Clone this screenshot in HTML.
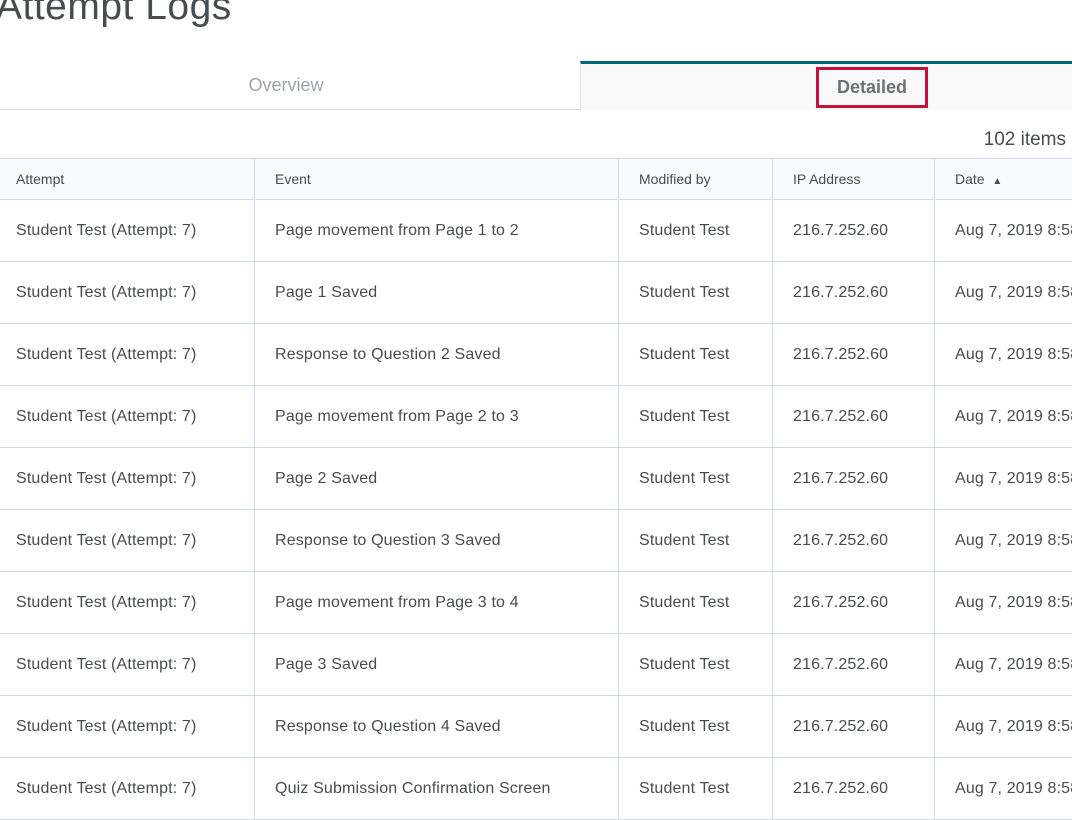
<!DOCTYPE html>
<html><head><style>
body{margin:0;width:1072px;height:811px;overflow:hidden;background:#fff;font-family:"Liberation Sans",sans-serif;color:#494c4e;position:relative}
h1{position:absolute;left:-4px;top:-15px;margin:0;font-weight:normal;font-size:39px;color:#494c4e;letter-spacing:0.5px}
.ov{position:absolute;left:0;top:62px;width:580px;height:47px;border-bottom:1px solid #dcdfe2;text-align:center;line-height:47px;font-size:18px;color:#a0a3a6}
.ov span{position:relative;left:-4px}
.dt{position:absolute;left:580px;top:61px;width:492px;height:49px;border-top:3px solid #006779;border-left:1px solid #e3e5e8;background:#f9f9f9;box-sizing:border-box}
.rb{position:absolute;left:816px;top:67px;width:112px;height:41px;border:3px solid #c5103b;box-sizing:border-box;text-align:center;line-height:35px;font-size:18px;font-weight:bold;color:#6e7174}
.items{position:absolute;right:6px;top:129px;font-size:19px;color:#494c4e}
table{position:absolute;left:-1px;top:158px;border-collapse:collapse;table-layout:fixed;width:1200px}
td,th{border:1px solid #d3d9e3;padding:0 0 0 16px;text-align:left;white-space:nowrap;overflow:hidden}
th{height:40px;background:#f9fafc;font-weight:normal;font-size:14px;color:#494c4e}
td{height:60px;font-size:16px;letter-spacing:0.15px;padding-top:1px}
.c1{padding-left:20px}
</style></head><body>
<h1>Attempt Logs</h1>
<div class="ov"><span>Overview</span></div>
<div class="dt"></div>
<div class="rb">Detailed</div>
<div class="items">102 items</div>
<table>
<colgroup><col style="width:255px"><col style="width:364px"><col style="width:154px"><col style="width:162px"><col style="width:265px"></colgroup>
<tr><th>Attempt</th><th class="c1">Event</th><th class="c1">Modified by</th><th class="c1">IP Address</th><th class="c1">Date&nbsp; <span style="font-size:10px">&#9650;</span></th></tr>
<tr><td>Student Test (Attempt: 7)</td><td class="c1">Page movement from Page 1 to 2</td><td class="c1">Student Test</td><td class="c1">216.7.252.60</td><td class="c1">Aug 7, 2019 8:58 AM</td></tr>
<tr><td>Student Test (Attempt: 7)</td><td class="c1">Page 1 Saved</td><td class="c1">Student Test</td><td class="c1">216.7.252.60</td><td class="c1">Aug 7, 2019 8:58 AM</td></tr>
<tr><td>Student Test (Attempt: 7)</td><td class="c1">Response to Question 2 Saved</td><td class="c1">Student Test</td><td class="c1">216.7.252.60</td><td class="c1">Aug 7, 2019 8:58 AM</td></tr>
<tr><td>Student Test (Attempt: 7)</td><td class="c1">Page movement from Page 2 to 3</td><td class="c1">Student Test</td><td class="c1">216.7.252.60</td><td class="c1">Aug 7, 2019 8:58 AM</td></tr>
<tr><td>Student Test (Attempt: 7)</td><td class="c1">Page 2 Saved</td><td class="c1">Student Test</td><td class="c1">216.7.252.60</td><td class="c1">Aug 7, 2019 8:58 AM</td></tr>
<tr><td>Student Test (Attempt: 7)</td><td class="c1">Response to Question 3 Saved</td><td class="c1">Student Test</td><td class="c1">216.7.252.60</td><td class="c1">Aug 7, 2019 8:58 AM</td></tr>
<tr><td>Student Test (Attempt: 7)</td><td class="c1">Page movement from Page 3 to 4</td><td class="c1">Student Test</td><td class="c1">216.7.252.60</td><td class="c1">Aug 7, 2019 8:58 AM</td></tr>
<tr><td>Student Test (Attempt: 7)</td><td class="c1">Page 3 Saved</td><td class="c1">Student Test</td><td class="c1">216.7.252.60</td><td class="c1">Aug 7, 2019 8:58 AM</td></tr>
<tr><td>Student Test (Attempt: 7)</td><td class="c1">Response to Question 4 Saved</td><td class="c1">Student Test</td><td class="c1">216.7.252.60</td><td class="c1">Aug 7, 2019 8:58 AM</td></tr>
<tr><td>Student Test (Attempt: 7)</td><td class="c1">Quiz Submission Confirmation Screen</td><td class="c1">Student Test</td><td class="c1">216.7.252.60</td><td class="c1">Aug 7, 2019 8:58 AM</td></tr>
</table>
</body></html>
